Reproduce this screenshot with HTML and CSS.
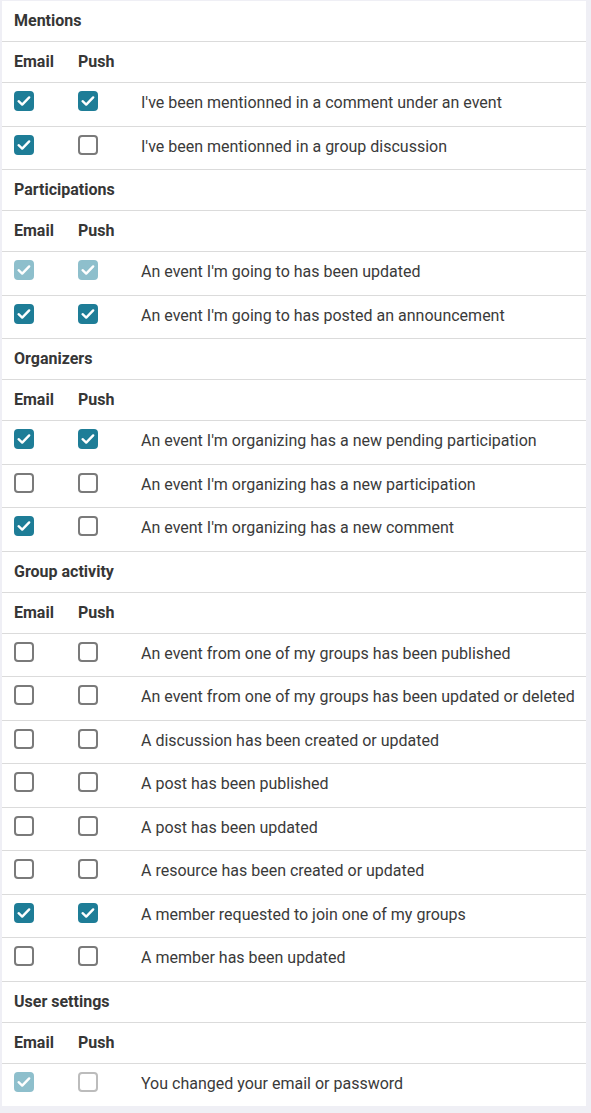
FILE: index.html
```html
<!DOCTYPE html>
<html>
<head>
<meta charset="utf-8">
<link rel="stylesheet" href="styles.css">
</head>
<body>
<div class="card">
  <div class="title-row">Mentions</div>
  <div class="row head"><span>Email</span><span>Push</span><span></span></div>
  <div class="row item"><span class="cb on"></span><span class="cb on"></span><span class="label">I've been mentionned in a comment under an event</span></div>
  <div class="row item"><span class="cb on"></span><span class="cb"></span><span class="label">I've been mentionned in a group discussion</span></div>

  <div class="title-row">Participations</div>
  <div class="row head"><span>Email</span><span>Push</span><span></span></div>
  <div class="row item"><span class="cb on dis"></span><span class="cb on dis"></span><span class="label">An event I'm going to has been updated</span></div>
  <div class="row item"><span class="cb on"></span><span class="cb on"></span><span class="label">An event I'm going to has posted an announcement</span></div>

  <div class="title-row">Organizers</div>
  <div class="row head"><span>Email</span><span>Push</span><span></span></div>
  <div class="row item"><span class="cb on"></span><span class="cb on"></span><span class="label">An event I'm organizing has a new pending participation</span></div>
  <div class="row item"><span class="cb"></span><span class="cb"></span><span class="label">An event I'm organizing has a new participation</span></div>
  <div class="row item"><span class="cb on"></span><span class="cb"></span><span class="label">An event I'm organizing has a new comment</span></div>

  <div class="title-row">Group activity</div>
  <div class="row head"><span>Email</span><span>Push</span><span></span></div>
  <div class="row item"><span class="cb"></span><span class="cb"></span><span class="label">An event from one of my groups has been published</span></div>
  <div class="row item"><span class="cb"></span><span class="cb"></span><span class="label">An event from one of my groups has been updated or deleted</span></div>
  <div class="row item"><span class="cb"></span><span class="cb"></span><span class="label">A discussion has been created or updated</span></div>
  <div class="row item"><span class="cb"></span><span class="cb"></span><span class="label">A post has been published</span></div>
  <div class="row item"><span class="cb"></span><span class="cb"></span><span class="label">A post has been updated</span></div>
  <div class="row item"><span class="cb"></span><span class="cb"></span><span class="label">A resource has been created or updated</span></div>
  <div class="row item"><span class="cb on"></span><span class="cb on"></span><span class="label">A member requested to join one of my groups</span></div>
  <div class="row item"><span class="cb"></span><span class="cb"></span><span class="label">A member has been updated</span></div>

  <div class="title-row">User settings</div>
  <div class="row head"><span>Email</span><span>Push</span><span></span></div>
  <div class="row item last"><span class="cb on dis"></span><span class="cb dis"></span><span class="label">You changed your email or password</span></div>
</div>
</body>
</html>
```
FILE: styles.css
```css
html, body {
  margin: 0;
  background: #efeff5;
}
body {
  padding: 1px 5px 8px 2px;
  font-family: Roboto, "Liberation Sans", sans-serif;
  font-size: 16px;
  line-height: 24px;
  color: #363636;
}
.card {
  background: #fff;
}
.title-row {
  height: 41px;
  box-sizing: border-box;
  padding: 8px 12px;
  font-weight: 700;
  border-bottom: 1px solid #dbdbdb;
}
.row {
  display: grid;
  grid-template-columns: 64px 63px 1fr;
  border-bottom: 1px solid #dbdbdb;
}
.row > span {
  padding: 8px 12px;
}
.row.head {
  height: 40px;
  font-weight: 700;
}
.row.item {
  height: 42.5px;
}
.row.item.last {
  border-bottom: none;
}
.row.item > .label {
  padding-left: 12px;
  padding-top: 8px;
  color: #3a3a3a;
  white-space: nowrap;
}
.cb {
  position: relative;
  box-sizing: border-box;
  width: 20px;
  height: 20px;
  margin: 8px 0 0 12px;
  padding: 0 !important;
  border: 2px solid #7a7a7a;
  border-radius: 4px;
  background: #fff;
}
.cb.dis {
  border-color: #bcbcbc;
}
.cb.on {
  border-color: #1e7d97;
  background-color: #1e7d97;
  background-image: url("data:image/svg+xml,%3Csvg xmlns='http://www.w3.org/2000/svg' viewBox='0 0 20 20'%3E%3Cpath d='M4.6 10.2 L8.2 13.6 L15.2 6.4' fill='none' stroke='white' stroke-width='2.4' stroke-linecap='round' stroke-linejoin='round'/%3E%3C/svg%3E");
  background-position: center;
  background-size: 20px 20px;
  background-repeat: no-repeat;
}
.cb.on.dis {
  border-color: #8ebfcc;
  background-color: #8ebfcc;
}
```
